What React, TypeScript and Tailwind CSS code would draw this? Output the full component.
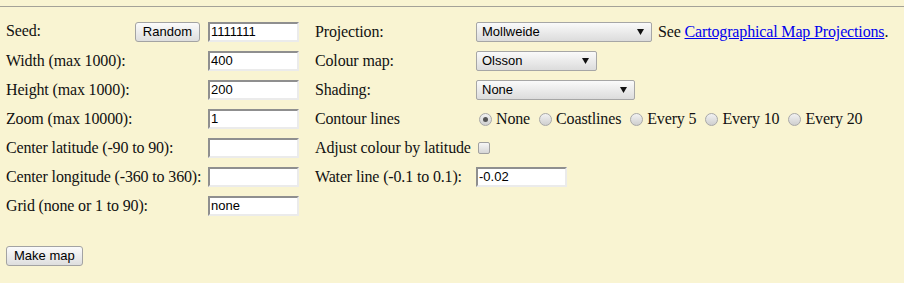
import React from "react";

const serif = "font-['Liberation_Serif',serif]";
const sans = "font-['Liberation_Sans',Arial,sans-serif]";

function TextBox({ value, width = "w-[91px]" }: { value?: string; width?: string }) {
  return (
    <div
      className={`${width} h-[20px] bg-white border-2 border-t-[#8f8f8f] border-l-[#8f8f8f] border-b-[#ebebeb] border-r-[#ebebeb] pl-[1px] text-[13px] leading-[16px] tracking-normal text-black ${sans}`}
    >
      {value}
    </div>
  );
}

function Button({ label, className = "" }: { label: string; className?: string }) {
  return (
    <button
      className={`h-[20px] rounded-[3px] border border-[#a3a3a3] bg-gradient-to-b from-[#fbfbfb] to-[#dedede] px-[7px] text-[13px] leading-[18px] tracking-normal text-black ${sans} ${className}`}
    >
      {label}
    </button>
  );
}

function Select({ value, width }: { value: string; width: string }) {
  return (
    <div
      className={`${width} h-[20px] flex items-center justify-between rounded-[2px] border border-[#a6a6a6] bg-gradient-to-b from-[#fafafa] to-[#dcdcdc] pl-[5px] pr-[7px] text-[13px] tracking-normal text-black ${sans}`}
    >
      <span>{value}</span>
      <svg width="7" height="6" viewBox="0 0 7 6">
        <path d="M0 0 H7 L3.5 6 Z" fill="#111" />
      </svg>
    </div>
  );
}

function Radio({ checked = false }: { checked?: boolean }) {
  return (
    <span className="w-[13px] h-[13px] rounded-full border border-[#a8a8a8] bg-gradient-to-b from-[#f2f2f2] to-[#cfcfcf] flex items-center justify-center shrink-0">
      {checked && <span className="w-[5px] h-[5px] rounded-full bg-[#555]" />}
    </span>
  );
}

const leftRows: { label: string; value?: string }[] = [
  { label: "Width (max 1000):", value: "400" },
  { label: "Height (max 1000):", value: "200" },
  { label: "Zoom (max 10000):", value: "1" },
  { label: "Center latitude (-90 to 90):" },
  { label: "Center longitude (-360 to 360):" },
  { label: "Grid (none or 1 to 90):", value: "none" },
];

const contours = ["None", "Coastlines", "Every 5", "Every 10", "Every 20"];

export default function App() {
  return (
    <div className={`min-h-[283px] w-[904px] bg-[#f9f4d2] text-[16px] tracking-[-0.15px] text-[#111] ${serif}`}>
      <div className="pt-[6px]">
        <div className="h-px bg-[#a4a298]" />
      </div>

      <div className="flex pt-[15px] pl-[6px] gap-[16px]">
        {/* left table */}
        <div className="grid grid-cols-[199px_91px] gap-x-[3px] gap-y-[9px] auto-rows-[20px]">
          <div className="flex items-center justify-between">
            <span className="leading-5 -mt-[2px]">Seed:</span>
            <Button label="Random" className="mr-[5px]" />
          </div>
          <TextBox value="1111111" />
          {leftRows.map((r) => (
            <React.Fragment key={r.label}>
              <div className="flex items-center leading-5 whitespace-nowrap">{r.label}</div>
              <TextBox value={r.value} />
            </React.Fragment>
          ))}
        </div>

        {/* right table */}
        <div className="grid grid-cols-[161px_auto] gap-y-[9px] auto-rows-[20px]">
          <div className="flex items-center leading-5">Projection:</div>
          <div className="flex items-center gap-[6px] whitespace-nowrap">
            <Select value="Mollweide" width="w-[176px]" />
            <span className="leading-5">
              See{" "}
              <a href="#" className="text-[#0000ee] underline">
                Cartographical Map Projections
              </a>
              .
            </span>
          </div>

          <div className="flex items-center leading-5">Colour map:</div>
          <div className="flex items-center">
            <Select value="Olsson" width="w-[121px]" />
          </div>

          <div className="flex items-center leading-5">Shading:</div>
          <div className="flex items-center">
            <Select value="None" width="w-[159px]" />
          </div>

          <div className="flex items-center leading-5">Contour lines</div>
          <div className="flex items-center pl-[3px] whitespace-nowrap">
            {contours.map((c, i) => (
              <span key={c} className={`flex items-center gap-[4px] ${i > 0 ? "ml-[9px]" : ""}`}>
                <Radio checked={i === 0} />
                <span className="leading-5">{c}</span>
              </span>
            ))}
          </div>

          <div className="flex items-center leading-5 whitespace-nowrap">Adjust colour by latitude</div>
          <div className="flex items-center pl-[2px]">
            <span className="w-[12px] h-[12px] rounded-[2px] border border-[#a0a0a0] bg-gradient-to-b from-[#f6f6f6] to-[#d6d6d6]" />
          </div>

          <div className="flex items-center leading-5 whitespace-nowrap">Water line (-0.1 to 0.1):</div>
          <div className="flex items-center">
            <TextBox value="-0.02" />
          </div>
        </div>
      </div>

      <div className="pl-[6px] pt-[27px]">
        <Button label="Make map" />
      </div>
    </div>
  );
}
